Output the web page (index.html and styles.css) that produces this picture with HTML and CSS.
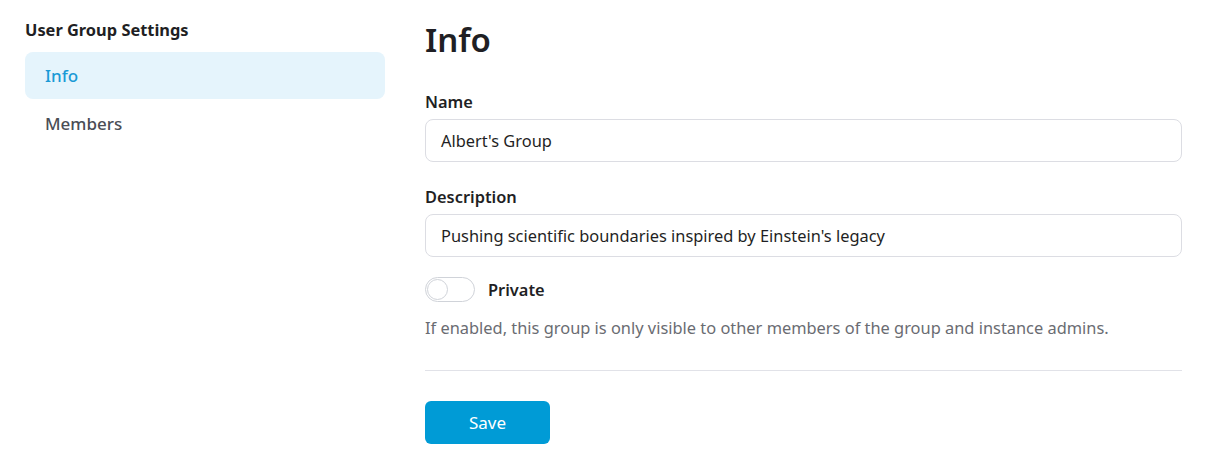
FILE: index.html
```html
<!DOCTYPE html>
<html>
<head>
<meta charset="utf-8">
<link rel="stylesheet" href="styles.css">
</head>
<body>
<div class="page">
  <aside class="sidebar">
    <div class="side-title">User Group Settings</div>
    <nav class="nav">
      <div class="nav-item active">Info</div>
      <div class="nav-item">Members</div>
    </nav>
  </aside>
  <main class="main">
    <h1 class="heading">Info</h1>
    <div class="field">
      <label class="label">Name</label>
      <div class="input">Albert's Group</div>
    </div>
    <div class="field">
      <label class="label">Description</label>
      <div class="input">Pushing scientific boundaries inspired by Einstein's legacy</div>
    </div>
    <div class="toggle-row">
      <span class="toggle"><span class="knob"></span></span>
      <span class="toggle-label">Private</span>
    </div>
    <p class="help">If enabled, this group is only visible to other members of the group and instance admins.</p>
    <hr class="divider">
    <button class="save">Save</button>
  </main>
</div>
</body>
</html>
```
FILE: styles.css
```css
* { box-sizing: border-box; }
html, body { margin: 0; padding: 0; background: #fff; }
body {
  font-family: "Noto Sans", "Open Sans", sans-serif;
  color: #1f1f24;
  font-size: 16.4px;
}
.page {
  display: flex;
  gap: 40px;
  padding: 18px 28px 0 25px;
}
.sidebar {
  width: 360px;
  flex-shrink: 0;
}
.side-title {
  font-weight: 700;
  font-size: 16.4px;
  line-height: 24px;
  color: #1f1f24;
}
.nav {
  margin-top: 10px;
  display: flex;
  flex-direction: column;
  gap: 1px;
}
.nav-item {
  height: 47px;
  line-height: 47px;
  padding-left: 20px;
  border-radius: 8px;
  font-size: 17px;
  font-weight: 500;
  color: #4a4d55;
}
.nav-item.active {
  background: #e5f4fc;
  color: #1a9ad6;
}
.main {
  flex: 1;
}
.heading {
  margin: 0;
  font-size: 33px;
  font-weight: 600;
  line-height: 44px;
  color: #1f1f24;
}
.field {
  margin-top: 29px;
}
.field + .field { margin-top: 24px; }
.label {
  display: block;
  font-weight: 600;
  font-size: 16.4px;
  line-height: 22px;
  margin-bottom: 6px;
}
.input {
  height: 43px;
  border: 1px solid #dcdde3;
  border-radius: 8px;
  padding: 0 15px;
  display: flex;
  align-items: center;
  font-size: 16.4px;
  color: #1f1f24;
}
.toggle-row {
  display: flex;
  align-items: center;
  gap: 13px;
  margin-top: 20px;
}
.toggle {
  width: 50px;
  height: 25px;
  border: 1px solid #d0d3d9;
  border-radius: 13px;
  position: relative;
  background: #fff;
}
.knob {
  position: absolute;
  left: 1px;
  top: 1px;
  width: 21px;
  height: 21px;
  border-radius: 50%;
  border: 1px solid #d0d3d9;
  background: #fff;
}
.toggle-label {
  font-weight: 600;
  font-size: 16.4px;
}
.help {
  margin: 14px 0 0;
  font-size: 16.4px;
  line-height: 24px;
  color: #6a6c72;
}
.divider {
  margin: 30px 0 0;
  border: 0;
  border-top: 1px solid #e1e2e8;
}
.save {
  margin-top: 30px;
  width: 125px;
  height: 43px;
  border: 0;
  border-radius: 6px;
  background: #009bd6;
  color: #fff;
  font-family: inherit;
  font-size: 17px;
}
```
